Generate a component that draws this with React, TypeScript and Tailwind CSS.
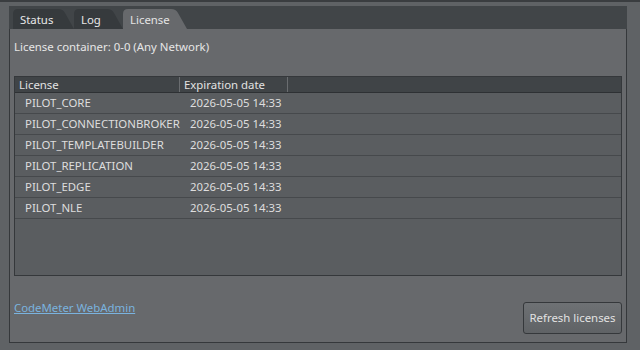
import React from "react";

const licenses = [
  "PILOT_CORE",
  "PILOT_CONNECTIONBROKER",
  "PILOT_TEMPLATEBUILDER",
  "PILOT_REPLICATION",
  "PILOT_EDGE",
  "PILOT_NLE",
];

function Tab({ label, width, active }: { label: string; width: number; active?: boolean }) {
  const h = 20;
  const d = `M0,${h} L0,5 Q0,0 5,0 L${width - 16},0 Q${width - 11},0 ${width - 9},4 L${width},${h} Z`;
  return (
    <div className="relative h-[20px] shrink-0" style={{ width }}>
      <svg className="absolute inset-0" width={width} height={h}>
        <path d={d} fill={active ? "#67696c" : "#363a3d"} />
      </svg>
      <span
        className={`relative block pl-[7px] pt-[2px] leading-[18px] ${
          active ? "text-[#e4e4e4]" : "text-[#e8e8e8]"
        }`}
      >
        {label}
      </span>
    </div>
  );
}

export default function App() {
  return (
    <div className="w-[640px] h-[350px] bg-[#5f6265] overflow-hidden font-['Noto_Sans',sans-serif] text-[11.4px]">
      <div className="h-[2px] bg-[#3a3d40]" />
      <div className="pl-[9px] pr-[13px] pt-[4px]">
        {/* Tab strip */}
        <div className="h-[23px] bg-[#414548] flex items-end pl-[4px]">
          <Tab label="Status" width={61} />
          <Tab label="Log" width={49} />
          <Tab label="License" width={64} active />
        </div>

        {/* Panel */}
        <div className="h-[314px] bg-[#67696c] border border-t-0 border-[#35383b] flex flex-col px-[4px]">
          <div className="pt-[10px] text-[#e6e6e6] leading-[16px]">
            License container: 0-0 (Any Network)
          </div>

          <div className="mt-[21px] h-[200px] bg-[#5a5d60] border border-[#35383b] flex flex-col">
            <div className="h-[16px] bg-[#404447] border-b border-[#2e3134] flex text-[#e2e2e2] leading-[15px]">
              <div className="w-[165px] pl-[4px] border-r border-[#6a6d70]">License</div>
              <div className="w-[108px] pl-[4px] border-r border-[#6a6d70]">Expiration date</div>
            </div>
            {licenses.map((l) => (
              <div
                key={l}
                className="h-[21px] flex items-center border-b border-[#46494c] text-[#dedede]"
              >
                <div className="w-[175px] pl-[10px] whitespace-nowrap">{l}</div>
                <div>2026-05-05 14:33</div>
              </div>
            ))}
          </div>

          <div className="flex-1 flex items-end justify-between pb-[8px]">
            <a href="#" className="mb-[18px] text-[#7ab3df] underline leading-[16px]">
              CodeMeter WebAdmin
            </a>
            <button className="w-[99px] h-[32px] rounded-[3px] border border-[#35383b] bg-gradient-to-b from-[#6e7174] to-[#5f6265] text-[#e2e2e2]">
              Refresh licenses
            </button>
          </div>
        </div>
      </div>
    </div>
  );
}
